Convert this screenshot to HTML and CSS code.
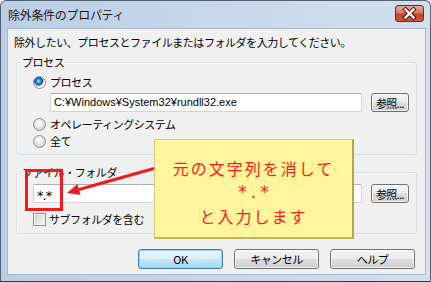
FILE: index.html
```html
<!DOCTYPE html>
<html lang="ja">
<head>
<meta charset="utf-8">
<link rel="stylesheet" href="styles.css">
</head>
<body>
<div class="window">
  <div class="titlebar">
    <span class="title">除外条件のプロパティ</span>
    <span class="close">
      <svg width="29" height="17" viewBox="0 0 29 17">
        <path d="M10.5 4.5 L18.5 12.5 M18.5 4.5 L10.5 12.5" stroke="#4a1208" stroke-width="4.4" stroke-linecap="square"/>
        <path d="M10.5 4.5 L18.5 12.5 M18.5 4.5 L10.5 12.5" stroke="#ffffff" stroke-width="2.4" stroke-linecap="square"/>
      </svg>
    </span>
  </div>
  <div class="client">
    <p class="intro">除外したい、プロセスとファイルまたはフォルダを入力してください。</p>
    <div class="group group-process">
      <span class="legend">プロセス</span>
      <div class="option first"><span class="radio checked"></span><span>プロセス</span></div>
      <div class="path-row indent-deep"><div class="field field-wide">C:¥Windows¥System32¥rundll32.exe</div><span class="btn browse">参照...</span></div>
      <div class="option second"><span class="radio"></span><span>オペレーティングシステム</span></div>
      <div class="option third"><span class="radio"></span><span>全て</span></div>
    </div>
    <div class="group group-file">
      <span class="legend">ファイル・フォルダ</span>
      <div class="path-row indent"><div class="field field-full stars">*.*</div><span class="btn browse">参照...</span></div>
      <div class="option check-row"><span class="checkbox"></span><span>サブフォルダを含む</span></div>
    </div>
    <div class="buttons">
      <span class="btn dlg default">OK</span>
      <span class="btn dlg">キャンセル</span>
      <span class="btn dlg">ヘルプ</span>
    </div>
  </div>
</div>
<svg class="arrow" width="431" height="282" viewBox="0 0 431 282">
  <line x1="154" y1="168.5" x2="79" y2="189.5" stroke="#ee1c1c" stroke-width="3"/>
  <polygon points="67,193 80.5,195 77.5,184" fill="#ee1c1c"/>
</svg>
<div class="callout">
  <div>元の文字列を消して</div>
  <div class="callout-stars">*.*</div>
  <div>と入力します</div>
</div>
<div class="highlight"></div>
</body>
</html>
```

FILE: styles.css
```css
* { box-sizing: border-box; }
html, body { margin: 0; padding: 0; }
body {
  position: relative;
  width: 431px;
  height: 282px;
  overflow: hidden;
  background: #ffffff;
  font-family: "Noto Sans CJK JP", "Noto Sans", sans-serif;
  font-size: 11px;
  color: #000;
}
.window {
  width: 431px;
  height: 282px;
  display: flex;
  flex-direction: column;
  border: 1px solid #4f6273;
  border-bottom-color: #23404e;
  border-radius: 6px 6px 0 0;
  background: linear-gradient(to right, #bccee5 0%, #c9d8ea 55%, #d3dfed 100%);
  padding: 0 5px 7px 7px;
}
.titlebar {
  height: 28px;
  display: flex;
  align-items: flex-start;
  justify-content: space-between;
  padding-top: 4px;
}
.title {
  font-size: 12px;
  line-height: 16px;
  margin-top: 2px;
  letter-spacing: -0.3px;
  color: #1a1a1a;
}
.close {
  width: 29px;
  height: 17px;
  margin-right: 1px;
  border: 1px solid #6b2a20;
  border-radius: 3px;
  background: linear-gradient(to bottom, #e9a898 0%, #d67a66 45%, #c0452c 55%, #c9583c 100%);
  display: flex;
  overflow: hidden;
}
.close svg { margin: -1px; }
.client {
  flex: 1;
  background: #f0f0f0;
  box-shadow: 0 0 0 1px #a7b9cd;
  display: flex;
  flex-direction: column;
  letter-spacing: -0.45px;
}
.intro {
  margin: 6px 0 0 6px;
  line-height: 14px;
}
.group {
  margin: 13px 8px 0 8px;
  border: 1px solid #d5dfe5;
  border-radius: 3px;
  box-shadow: inset 1px 1px 0 #ffffff;
  display: flex;
  flex-direction: column;
  padding-bottom: 5px;
}
.group-file { margin-top: 17px; padding-bottom: 6px; }
.legend {
  align-self: flex-start;
  margin: -8px 0 0 4px;
  padding: 0 1px;
  line-height: 14px;
  background: #f0f0f0;
}
.option {
  display: flex;
  align-items: center;
  height: 16px;
  margin-left: 16px;
  gap: 4px;
}
.option.first { margin-top: 5px; }
.option.second { margin-top: 4px; }
.option.third { margin-top: 1px; }
.check-row { margin-top: 8px; gap: 3px; }
.radio {
  width: 13px;
  height: 13px;
  border-radius: 50%;
  border: 1px solid #8c8e90;
  background: radial-gradient(circle at 45% 40%, #fdfdfd 0, #f0f0f0 3px, #d2d2d2 6px);
}
.radio.checked {
  background:
    radial-gradient(circle at 42% 38%, #c8ecff 0, #4aa4e8 1.6px, #1560b8 3.4px, #0d3f80 4.2px, #e6e6e6 4.6px, #f7f7f7 6px);
}
.checkbox {
  width: 13px;
  height: 13px;
  border: 1px solid #8e8f8f;
  box-shadow: inset 0 0 0 1px #f4f4f4;
  background: linear-gradient(135deg, #cbcbcb 0%, #e4e4e4 50%, #f7f7f7 100%);
}
.path-row {
  display: flex;
  align-items: center;
  height: 19px;
  gap: 8px;
}
.indent-deep { margin: 3px 0 0 33px; }
.indent { margin: 5px 0 0 16px; }
.field {
  height: 19px;
  background: #ffffff;
  border: 1px solid #d0d4da;
  border-top-color: #abadb3;
  border-radius: 2px;
  padding: 0 3px;
  line-height: 17px;
  font-family: "Liberation Sans", "Noto Sans CJK JP", sans-serif;
  letter-spacing: 0;
  white-space: nowrap;
}
.field.stars {
  font-family: "DejaVu Sans", sans-serif;
  font-size: 13px;
  padding-top: 2px;
  letter-spacing: -1px;
}
.field-wide { width: 312px; }
.field-full { width: 329px; }
.btn {
  display: flex;
  align-items: center;
  justify-content: center;
  border: 1px solid #707070;
  border-radius: 3px;
  background: linear-gradient(to bottom, #f3f3f3 0%, #ebebeb 48%, #dddddd 52%, #cfcfcf 100%);
  box-shadow: inset 0 0 0 1px rgba(255,255,255,0.7);
  line-height: 14px;
}
.browse {
  width: 38px;
  height: 19px;
  letter-spacing: -0.6px;
  margin-left: 1px;
}
.buttons {
  display: flex;
  justify-content: flex-end;
  gap: 11px;
  margin: 15px 10px 0 0;
}
.dlg {
  width: 85px;
  height: 20px;
}
.dlg.default {
  border-color: #3c7fb1;
  background: linear-gradient(to bottom, #eaf6fd 0%, #d9f0fc 48%, #bee6fd 52%, #a7d9f5 100%);
  box-shadow: inset 0 0 0 1px #9ad2f2;
}
.arrow {
  position: absolute;
  left: 0;
  top: 0;
}
.callout {
  position: absolute;
  left: 154px;
  top: 139px;
  width: 200px;
  height: 100px;
  background: #fef59c;
  border: 1px solid #d3cb7c;
  border-right: 2px solid #aea659;
  border-bottom: 2px solid #c0b865;
  padding-top: 16px;
  color: #ff1a1a;
  font-size: 16px;
  line-height: 24px;
  letter-spacing: 2px;
  text-align: center;
}
.callout-stars {
  font-family: "DejaVu Sans", sans-serif;
  font-size: 17px;
  letter-spacing: 4px;
  padding-left: 4px;
}
.highlight {
  position: absolute;
  left: 25px;
  top: 169px;
  width: 38px;
  height: 42px;
  border: 3px solid #ee1c1c;
}
```
